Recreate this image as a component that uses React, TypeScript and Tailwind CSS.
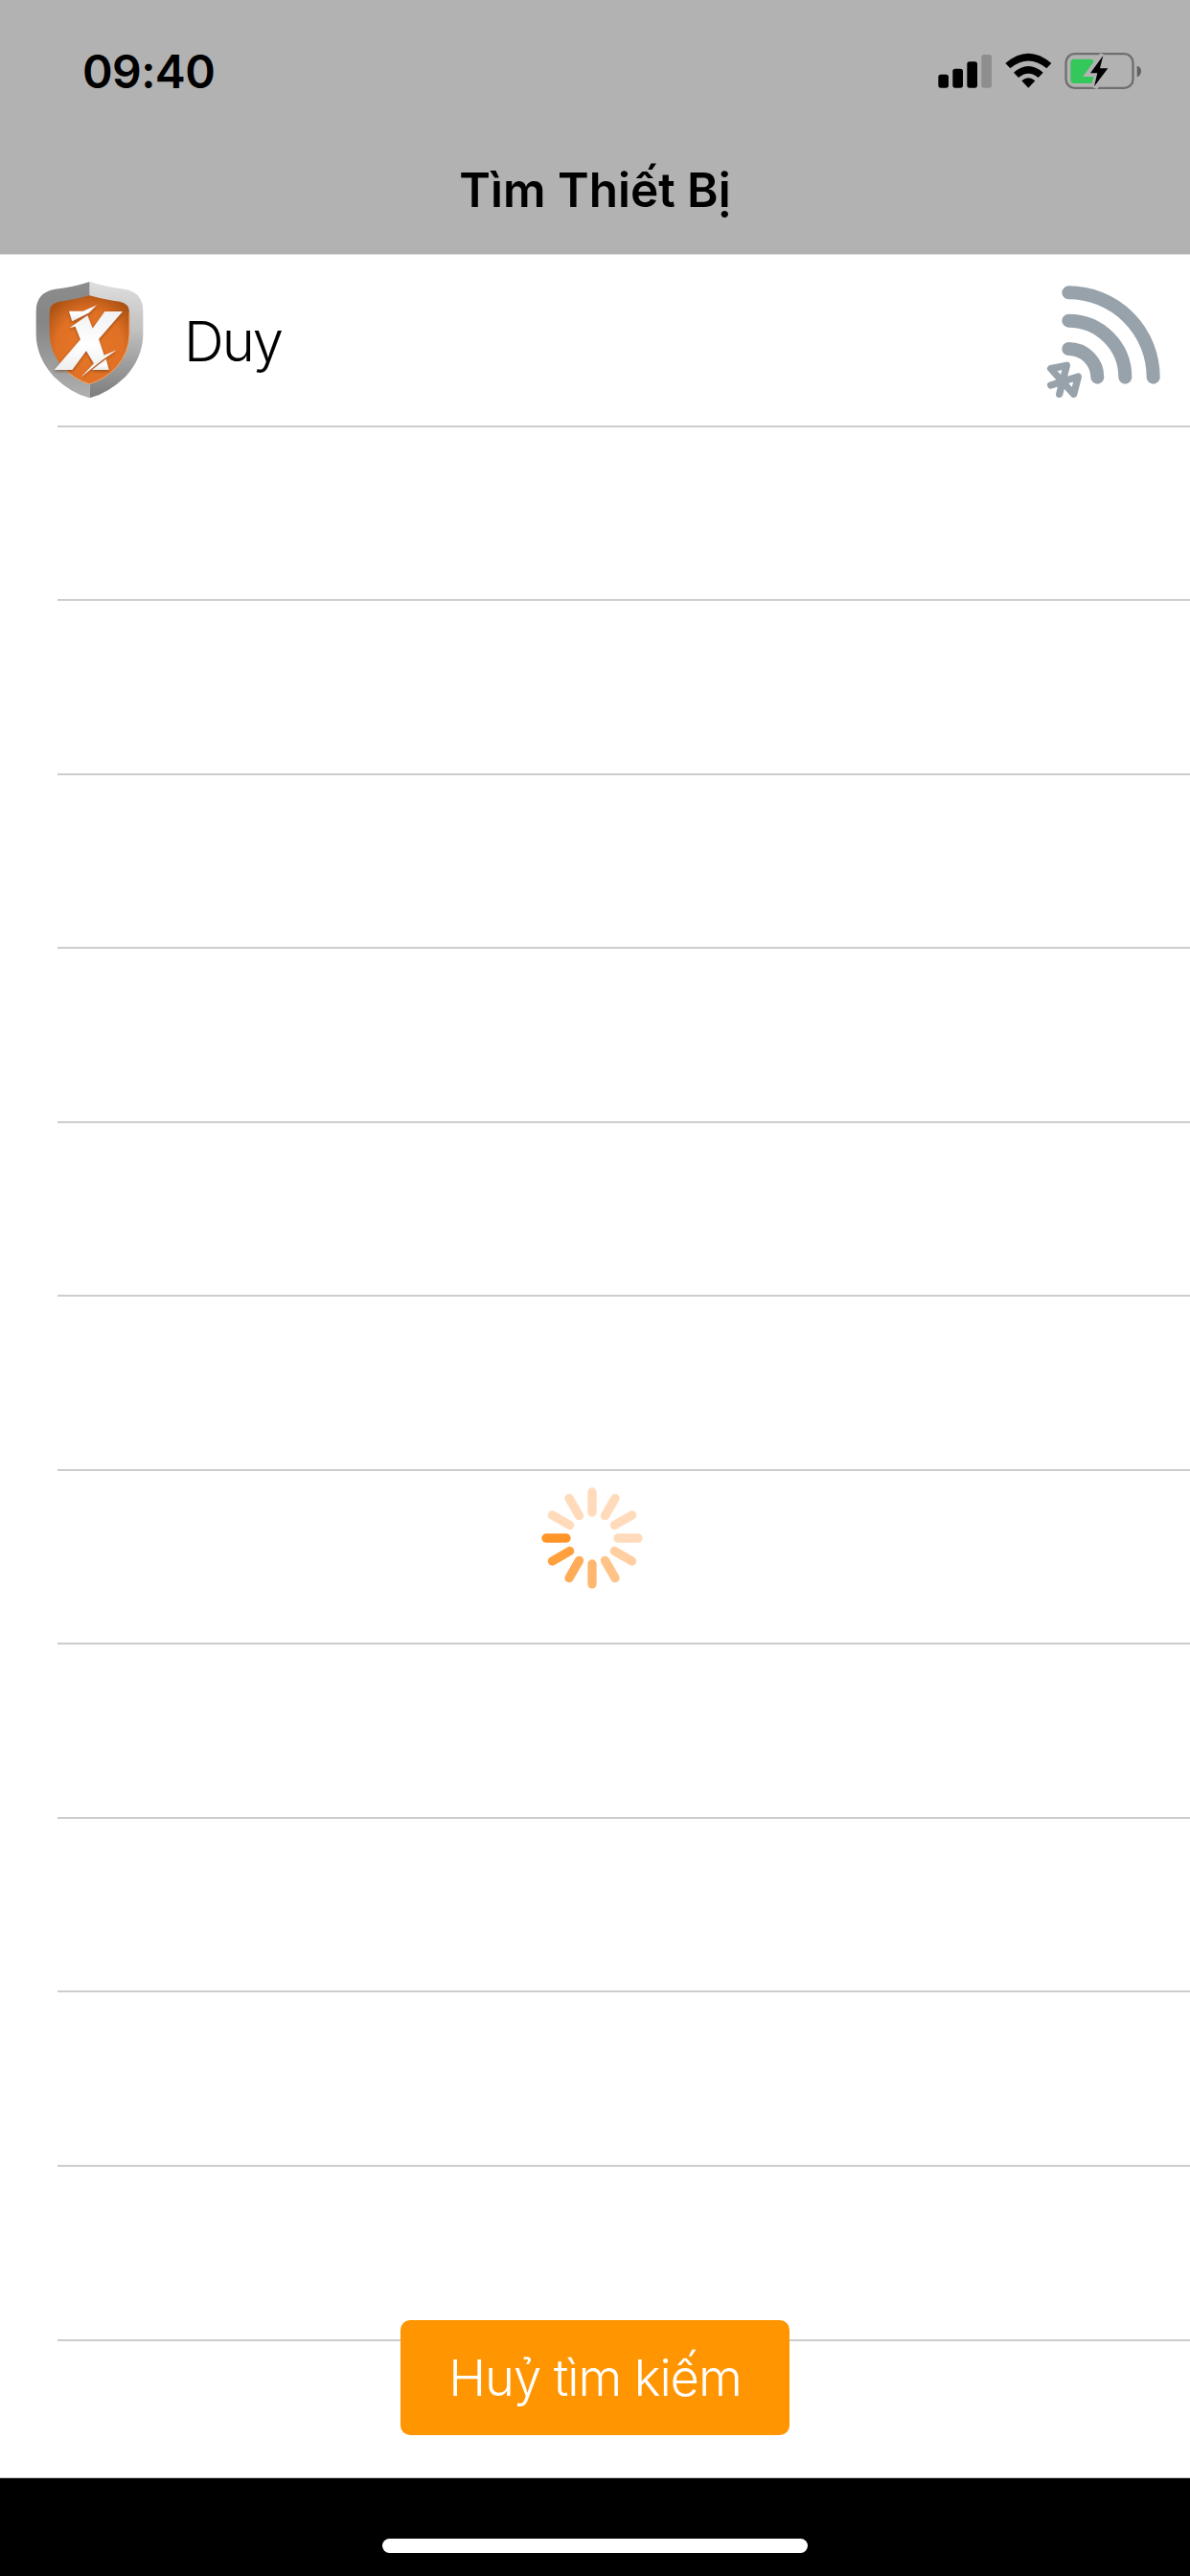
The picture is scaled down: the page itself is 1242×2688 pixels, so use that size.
const spokes = [
  { angle: 0, color: '#ffdbbb' },
  { angle: 30, color: '#ffcfa2' },
  { angle: 60, color: '#ffc388' },
  { angle: 90, color: '#ffb76f' },
  { angle: 120, color: '#ffab57' },
  { angle: 150, color: '#ffa03d' },
  { angle: 180, color: '#ff9427' },
  { angle: 210, color: '#ffdbbb' },
  { angle: 240, color: '#ffdbbb' },
  { angle: 270, color: '#ffdbbb' },
  { angle: 300, color: '#ffdbbb' },
  { angle: 330, color: '#ffdbbb' },
];

function StatusIcons() {
  return (
    <svg className="h-[45px] w-[220px]" viewBox="111 96 660 135">
      <rect x="118" y="173" width="32" height="42" rx="8" />
      <rect x="163" y="155" width="32" height="60" rx="8" />
      <rect x="208" y="133" width="32" height="82" rx="8" />
      <rect x="253" y="111" width="32" height="104" rx="8" fill="#8e8e8e" />
      <path d="M328 138 Q400 76 472 138 L457 154 Q400 107 343 154Z" />
      <path d="M354 167 Q400 127 446 167 L431 183 Q400 157 369 183Z" />
      <path d="M379 193 Q400 175 421 193 L400 215Z" />
      <rect x="517.500" y="108.500" width="210" height="107" rx="27" fill="none" stroke="#6f6f6f" strokeWidth="7" />
      <path d="M740 146 Q753 150 753 163 Q753 177 740 181Z" fill="#616161" />
      <rect x="532" y="125" width="73" height="76" rx="12" fill="#34c759" />
      <path d="M634 112 L592 169 H620 L606 213 L648 154 H622Z" fill="#b2b2b2" stroke="#b2b2b2" strokeWidth="22" />
      <path d="M634 114 L594 169 H616 L606 211 L649 154 H624Z" />
    </svg>
  );
}

function ShieldLogo() {
  return (
    <svg className="h-[125px] w-[115px]" viewBox="48 66 345 375">
      <defs>
        <linearGradient id="rimLeft" x1="0" y1="0" x2="0" y2="1">
          <stop offset="0" stopColor="#8c8c8c" />
          <stop offset=".35" stopColor="#868686" />
          <stop offset="1" stopColor="#b0b0b0" />
        </linearGradient>
        <linearGradient id="rimRight" x1="0" y1="0" x2="0" y2="1">
          <stop offset="0" stopColor="#dedede" />
          <stop offset=".4" stopColor="#c2c2c2" />
          <stop offset="1" stopColor="#7c7c7c" />
        </linearGradient>
        <radialGradient id="core" cx=".5" cy=".6" r=".65">
          <stop offset="0" stopColor="#e77728" />
          <stop offset=".65" stopColor="#df7024" />
          <stop offset="1" stopColor="#ac5214" />
        </radialGradient>
        <linearGradient id="mark" x1="0" y1="0" x2="0" y2="1">
          <stop offset="0" stopColor="#f1f1f1" />
          <stop offset=".5" stopColor="#ffffff" />
          <stop offset="1" stopColor="#e9e9e9" />
        </linearGradient>
        <filter id="markShadow" x="-20%" y="-20%" width="140%" height="140%">
          <feDropShadow dx="0" dy="4" stdDeviation="4" floodColor="#5c2a08" floodOpacity=".6" />
        </filter>
      </defs>
      <path d="M221 72 Q165 90 113 95 Q52 105 53 165 V240 Q55 310 108 368 Q160 420 221 436Z" fill="url(#rimLeft)" />
      <path d="M221 72 Q280 90 329 95 Q389 105 388 165 V240 Q386 310 334 368 Q280 420 221 436Z" fill="url(#rimRight)" />
      <path
        d="M220 115 Q165 130 125 134 Q95 140 95 168 V235 Q97 295 136 339 Q172 378 220 392 Q268 378 305 339 Q344 295 345 235 V168 Q345 140 315 134 Q275 130 220 115Z"
        fill="url(#core)"
      />
      <path
        d="M345 168 V235 Q344 295 305 339 Q268 378 220 392 Q172 378 136 339"
        fill="none"
        stroke="#f0a468"
        strokeWidth="3"
      />
      <g fill="url(#mark)" filter="url(#markShadow)">
        <path d="M156 164 H200 L243 145 L219 169 L166 196Z" />
        <path d="M158 216 L214 178 L230 218 L268 165 H324 L249 251 L266 302 L305 286 L258 319 L192 372 L234 328 L210 288 L166 348 H110 L192 253 L176 212Z" />
        <path d="M272 314 L281 348 H228Z" />
      </g>
    </svg>
  );
}

function BluetoothSignal() {
  return (
    <svg
      className="size-[124px]"
      viewBox="60 45 372 372"
      fill="none"
      stroke="#97a2aa"
      strokeLinecap="round"
      strokeLinejoin="round"
    >
      <g strokeWidth="42">
        <path d="M136 76 A265 265 0 0 1 401 341" />
        <path d="M136 164 A177 177 0 0 1 313 341" />
        <path d="M136 252 A90 89 0 0 1 226 341" />
      </g>
      <path d="M80 366 L166 339 L152 394 L80 314 L130 304 L107 394" strokeWidth="22" />
    </svg>
  );
}

function Spinner() {
  return (
    <svg className="size-[106px]" viewBox="-159 -159 318 318">
      {spokes.map((s) => (
        <path
          key={s.angle}
          d="M81 0 H144"
          transform={`rotate(${s.angle})`}
          stroke={s.color}
          strokeWidth="28"
          strokeLinecap="round"
        />
      ))}
    </svg>
  );
}

export default function App() {
  return (
    <div className="flex h-[2688px] w-[1242px] flex-col overflow-hidden bg-white font-['Inter',sans-serif] text-black">
      <header className="h-[266px] shrink-0 border-b border-[#dddddd] bg-[#b2b2b2]">
        <div className="flex h-[132px] items-start justify-between pt-[52px] pr-[45px] pl-[86px]">
          <span className="text-[48px] leading-[46px] font-semibold tracking-[-0.6px]">09:40</span>
          <StatusIcons />
        </div>
        <h1 className="text-center text-[49.5px] leading-[132px] font-semibold">Tìm Thiết Bị</h1>
      </header>

      <main className="relative h-[2320px] shrink-0 overflow-hidden border-b border-[#cccccc]">
        <ul>
          <li className="flex h-[177.5px] items-center pr-[28px] pl-[36px]">
            <ShieldLogo />
            <span className="mt-[2px] ml-[41px] text-[58px] leading-[70px] font-light tracking-[-2px]">Duy</span>
            <span className="mt-[4px] ml-auto">
              <BluetoothSignal />
            </span>
          </li>
          {Array.from({ length: 12 }, (_, i) => (
            <li key={i} className="ml-[60px] h-[181.55px] border-t-2 border-[#cdcdcd]" />
          ))}
        </ul>
        <div className="absolute top-[1286px] left-[565px]">
          <Spinner />
        </div>
        <button className="absolute top-[2155px] left-[418px] h-[120px] w-[406px] rounded-[10px] bg-[#ff9500] text-[52.5px] font-light tracking-[-1.1px] text-white">
          Huỷ tìm kiếm
        </button>
      </main>

      <footer className="flex h-[102px] shrink-0 justify-center bg-black pt-[63px]">
        <div className="h-[15px] w-[444px] rounded-full bg-white" />
      </footer>
    </div>
  );
}
